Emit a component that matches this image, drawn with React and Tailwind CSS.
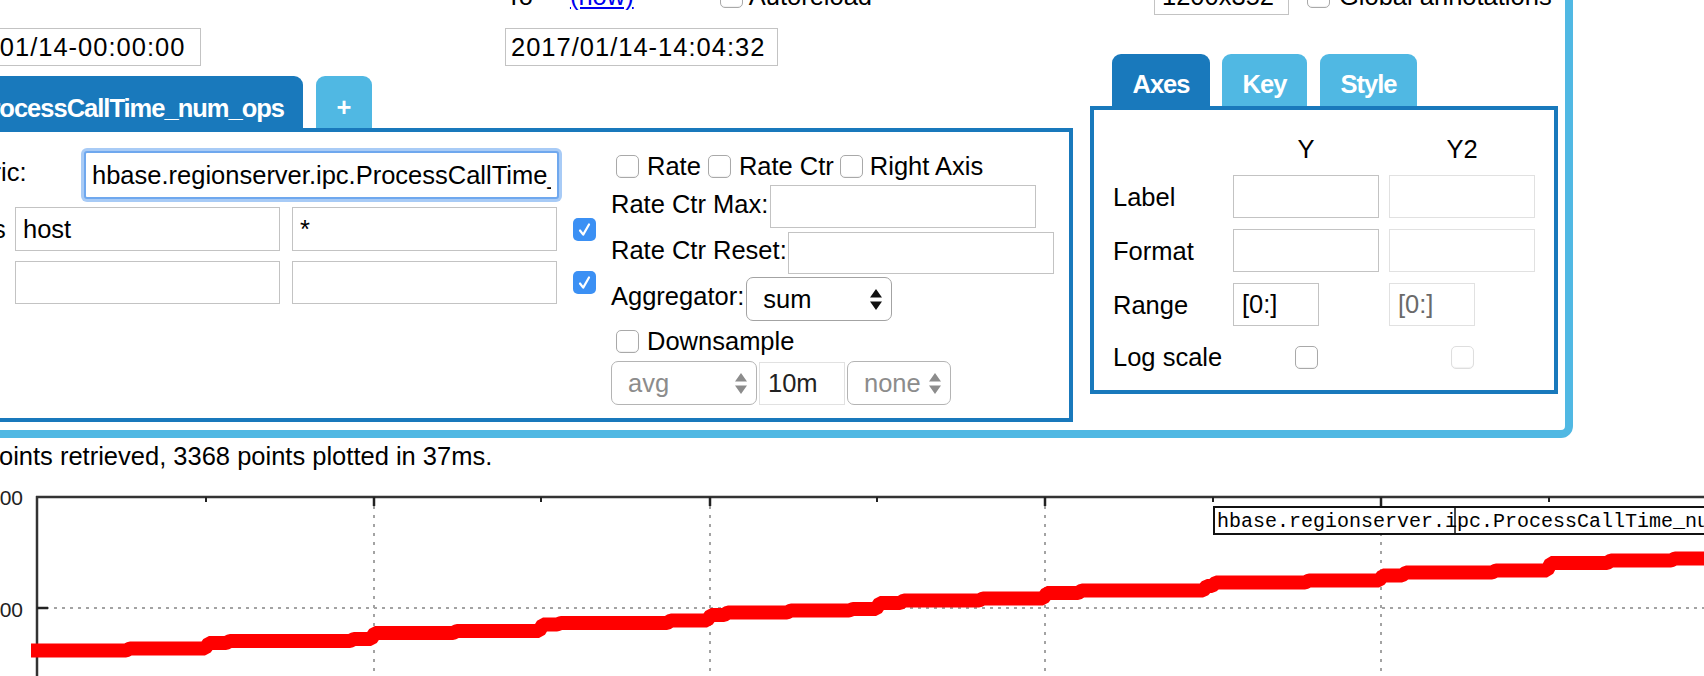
import React from 'react';

const DARK = 'bg-[#1979bc]';
const LIGHT = 'bg-[#50b8e3]';

function Checkbox({ checked = false, faded = false }) {
  if (checked) {
    return (
      <span className="flex h-[23px] w-[23px] shrink-0 items-center justify-center rounded-[5px] bg-[#3b90f4]">
        <svg width="23" height="23" viewBox="0 0 23 23">
          <path d="M7 12.5 L10.2 16.6 L16 6.5" fill="none" stroke="#fff" strokeWidth="2.2" strokeLinecap="round" strokeLinejoin="round" />
        </svg>
      </span>
    );
  }
  return (
    <span
      className={`block h-[23px] w-[23px] shrink-0 rounded-[5px] border bg-white shadow-[inset_0_-1px_1px_rgba(0,0,0,0.06)] ${
        faded ? 'border-[#dedede]' : 'border-[#a9a9a9]'
      }`}
    />
  );
}

function Field({ value = '', faded = false, color = 'text-black', className = '' }) {
  return (
    <input
      readOnly
      value={value}
      className={`block shrink-0 border bg-white outline-none ${color} ${faded ? 'border-[#e1e1e1]' : 'border-[#c3c3c3]'} ${className}`}
    />
  );
}

function Select({ value, width, disabled = false }) {
  return (
    <div
      className={`flex h-full shrink-0 items-center justify-between rounded-[7px] border bg-white pl-[16px] pr-[9px] ${width} ${
        disabled ? 'border-[#b4b4b4] text-[#8c8c8c]' : 'border-[#a3a3a3] text-black'
      }`}
    >
      <span>{value}</span>
      <svg width="12" height="21" viewBox="0 0 12 21">
        <path d="M6 0 L12 8.5 L0 8.5 Z M0 12.5 L12 12.5 L6 21 Z" fill={disabled ? '#8c8c8c' : '#111'} />
      </svg>
    </div>
  );
}

// gnuplot image below the form
function Graph() {
  const oy = 474;
  const segs = [
    [31, 650.5], [128, 648.5], [207, 643], [228, 641], [352, 639], [373, 633], [455, 631],
    [541, 624.5], [559, 623], [669, 620.5], [709, 615], [726, 612.5], [789, 610.5], [851, 609],
    [878, 603], [902, 600.5], [981, 598.5], [1045, 593], [1080, 590.5], [1205, 586], [1214, 582.5],
    [1307, 580.5], [1381, 575.5], [1404, 572.5], [1494, 570.5], [1549, 563], [1609, 560.5], [1673, 558.5],
  ];
  let d = `M31 ${segs[0][1] - oy}`;
  for (let i = 1; i < segs.length; i++) {
    const [x, y] = segs[i];
    d += ` H${x - 2} L${x + 2} ${y - oy}`;
  }
  d += ' H1712';
  const majors = [374, 710, 1045, 1381];
  const minors = [206, 541, 877, 1213, 1549];

  return (
    <svg width="1704" height="202" viewBox="0 0 1704 202" className="block">
      <line x1="38" y1="134" x2="1704" y2="134" stroke="#a3a3a3" strokeWidth="2" strokeDasharray="3 5" />
      {majors.map((x) => (
        <line key={x} x1={x} y1="32" x2={x} y2="202" stroke="#a3a3a3" strokeWidth="2" strokeDasharray="3 6" />
      ))}
      <line x1="36" y1="23" x2="1704" y2="23" stroke="#333" strokeWidth="2.5" />
      <line x1="37" y1="22" x2="37" y2="202" stroke="#333" strokeWidth="2.5" />
      {majors.map((x) => (
        <line key={`t${x}`} x1={x} y1="23" x2={x} y2="32" stroke="#222" strokeWidth="2.5" />
      ))}
      {minors.map((x) => (
        <line key={`m${x}`} x1={x} y1="23" x2={x} y2="28" stroke="#222" strokeWidth="2" />
      ))}
      <line x1="37" y1="134" x2="48" y2="134" stroke="#222" strokeWidth="2.5" />
      <text x="23" y="31" textAnchor="end" fontSize="21" fill="#222" fontFamily="Liberation Sans, sans-serif">3000</text>
      <text x="23" y="143" textAnchor="end" fontSize="21" fill="#222" fontFamily="Liberation Sans, sans-serif">2000</text>
      <path d={d} stroke="#ff0000" strokeWidth="14" fill="none" strokeLinejoin="bevel" />
      <rect x="1214" y="33" width="520" height="27" fill="#fff" stroke="#111" strokeWidth="2" />
      <line x1="1455" y1="33" x2="1455" y2="60" stroke="#111" strokeWidth="1.5" />
      <text x="1217" y="53" fontSize="20" fill="#000" fontFamily="Liberation Mono, monospace">
        hbase.regionserver.ipc.ProcessCallTime_num_ops
      </text>
    </svg>
  );
}

export default function App() {
  return (
    <div className="h-[676px] w-[1704px] overflow-hidden bg-white font-['Liberation_Sans',Arial,sans-serif] text-[25.5px] leading-[30px] text-black">
      <div className="-ml-[140px] -mt-[40px] w-[1713px]">
        {/* light blue frame */}
        <div className="flex w-[1713px] items-start rounded-br-[12px] border-[8px] border-[#50b8e3] pb-[8px] pl-[8px] pr-[7px] pt-[9px]">
          {/* left column: times, query tabs, query box */}
          <div className="flex w-[1197px] shrink-0 flex-col">
            <div className="flex h-[38px] items-center whitespace-nowrap">
              <span className="ml-[52px] w-[577px] shrink-0 pl-[1px]">From</span>
              <span className="ml-[1px]">To</span>
              <a className="ml-[37px] text-[#0000ee] underline">(now)</a>
              <span className="ml-[86px]">
                <Checkbox />
              </span>
              <span className="ml-[6px]">Autoreload</span>
            </div>

            <div className="mt-[13px] flex h-[38px] items-center">
              <Field value="2017/01/14-00:00:00" className="ml-[49px] h-[38px] w-[276px] px-[5px] tracking-[1px]" />
              <Field value="2017/01/14-14:04:32" className="ml-[304px] h-[38px] w-[273px] px-[5px] tracking-[1px]" />
            </div>

            <div className="mt-[10px] flex h-[52px]">
              <div className={`flex w-[427px] shrink-0 items-center justify-end overflow-hidden whitespace-nowrap rounded-t-[9px] ${DARK} pr-[19px] pt-[11px] font-bold tracking-[-1px] text-white`}>
                hbase.regionserver.ipc.ProcessCallTime_num_ops
              </div>
              <div className={`ml-[13px] flex w-[56px] items-center justify-center rounded-t-[9px] ${LIGHT} pt-[10px] font-bold text-white`}>
                +
              </div>
            </div>

            <div className="flex h-[294px] border-4 border-[#1979bc] bg-white">
              <div className="w-[731px] shrink-0">
                <div className="mt-[19px] flex h-[48px] items-center">
                  <span className="w-[204px] shrink-0 pb-[6px] pl-[70px]">Metric:</span>
                  <input
                    readOnly
                    value="hbase.regionserver.ipc.ProcessCallTime_num_ops"
                    className="block h-[48px] w-[475px] shrink-0 rounded-[3px] border-2 border-[#6fa8ee] bg-white px-[6px] text-black shadow-[0_0_0_3px_#a8cbf6] outline-none"
                  />
                </div>
                <div className="mt-[8px] flex h-[44px] items-center">
                  <span className="w-[135px] shrink-0 pl-[72px]">Tags</span>
                  <Field value="host" className="h-[44px] w-[265px] px-[7px]" />
                  <Field value="*" className="ml-[12px] h-[44px] w-[265px] px-[7px]" />
                  <span className="ml-[16px]">
                    <Checkbox checked />
                  </span>
                </div>
                <div className="mt-[10px] flex h-[43px] items-center">
                  <span className="w-[135px] shrink-0" />
                  <Field className="h-[43px] w-[265px] px-[7px]" />
                  <Field className="ml-[12px] h-[43px] w-[265px] px-[7px]" />
                  <span className="ml-[16px]">
                    <Checkbox checked />
                  </span>
                </div>
              </div>

              <div className="flex-1 whitespace-nowrap pt-[22px]">
                <div className="flex h-[24px] items-center">
                  <span className="ml-[5px]"><Checkbox /></span>
                  <span className="ml-[8px]">Rate</span>
                  <span className="ml-[7px]"><Checkbox /></span>
                  <span className="ml-[8px]">Rate Ctr</span>
                  <span className="ml-[6px]"><Checkbox /></span>
                  <span className="ml-[7px]">Right Axis</span>
                </div>
                <div className="mt-[7px] flex h-[43px] items-center">
                  <span className="pb-[6px]">Rate Ctr Max:</span>
                  <Field className="ml-[2px] h-[43px] w-[266px] px-[6px]" />
                </div>
                <div className="mt-[4px] flex h-[42px] items-center">
                  <span className="pb-[6px]">Rate Ctr Reset:</span>
                  <Field className="ml-[1px] h-[42px] w-[266px] px-[6px]" />
                </div>
                <div className="mt-[3px] flex h-[44px] items-center">
                  <span className="pb-[6px]">Aggregator:</span>
                  <div className="ml-[2px] h-full">
                    <Select value="sum" width="w-[146px]" />
                  </div>
                </div>
                <div className="mt-[8px] flex h-[24px] items-center">
                  <span className="ml-[5px]"><Checkbox /></span>
                  <span className="ml-[8px]">Downsample</span>
                </div>
                <div className="mt-[8px] flex h-[44px] items-center">
                  <Select value="avg" width="w-[146px]" disabled />
                  <Field value="10m" faded color="text-[#222]" className="ml-[2px] h-[43px] w-[86px] px-[8px]" />
                  <div className="ml-[2px] h-full">
                    <Select value="none" width="w-[104px]" disabled />
                  </div>
                </div>
              </div>
            </div>
          </div>

          {/* right column: size, annotations, axes panel */}
          <div className="ml-[17px] flex w-[468px] shrink-0 flex-col">
            <div className="flex h-[38px] items-center whitespace-nowrap">
              <Field value="1200x352" className="ml-[64px] h-[38px] w-[135px] px-[7px]" />
              <span className="ml-[18px]"><Checkbox /></span>
              <span className="ml-[9px]">Global annotations</span>
            </div>

            <div className="mt-[39px] flex h-[52px] font-bold tracking-[-1px] text-white">
              <div className={`ml-[22px] flex w-[98px] items-center justify-center rounded-t-[9px] ${DARK} pt-[8px]`}>Axes</div>
              <div className={`ml-[12px] flex w-[85px] items-center justify-center rounded-t-[9px] ${LIGHT} pt-[8px]`}>Key</div>
              <div className={`ml-[13px] flex w-[97px] items-center justify-center rounded-t-[9px] ${LIGHT} pt-[8px]`}>Style</div>
            </div>

            <div className="h-[288px] border-4 border-[#1979bc] bg-white pl-[19px] pt-[24px]">
              <div className="grid h-[30px] grid-cols-[110px_146px_146px] items-center gap-x-[10px]">
                <span />
                <span className="text-center">Y</span>
                <span className="text-center">Y2</span>
              </div>
              <div className="mt-[11px] grid h-[43px] grid-cols-[110px_146px_146px] items-center gap-x-[10px]">
                <span>Label</span>
                <Field className="h-[43px] w-[146px] px-[8px]" />
                <Field faded className="h-[43px] w-[146px] px-[8px]" />
              </div>
              <div className="mt-[11px] grid h-[43px] grid-cols-[110px_146px_146px] items-center gap-x-[10px]">
                <span>Format</span>
                <Field className="h-[43px] w-[146px] px-[8px]" />
                <Field faded className="h-[43px] w-[146px] px-[8px]" />
              </div>
              <div className="mt-[11px] grid h-[43px] grid-cols-[110px_146px_146px] items-center gap-x-[10px]">
                <span>Range</span>
                <Field value="[0:]" className="h-[43px] w-[86px] px-[8px]" />
                <Field value="[0:]" faded color="text-[#6a6a6a]" className="h-[43px] w-[86px] px-[8px]" />
              </div>
              <div className="mt-[16px] grid h-[24px] grid-cols-[110px_146px_146px] items-center gap-x-[10px]">
                <span className="whitespace-nowrap">Log scale</span>
                <span className="flex justify-center"><Checkbox /></span>
                <span className="flex justify-center"><Checkbox faded /></span>
              </div>
            </div>
          </div>
        </div>

        <div className="flex h-[36px] items-center whitespace-nowrap pl-[61px]">
          3368 points retrieved, 3368 points plotted in 37ms.
        </div>
      </div>

      <Graph />
    </div>
  );
}
